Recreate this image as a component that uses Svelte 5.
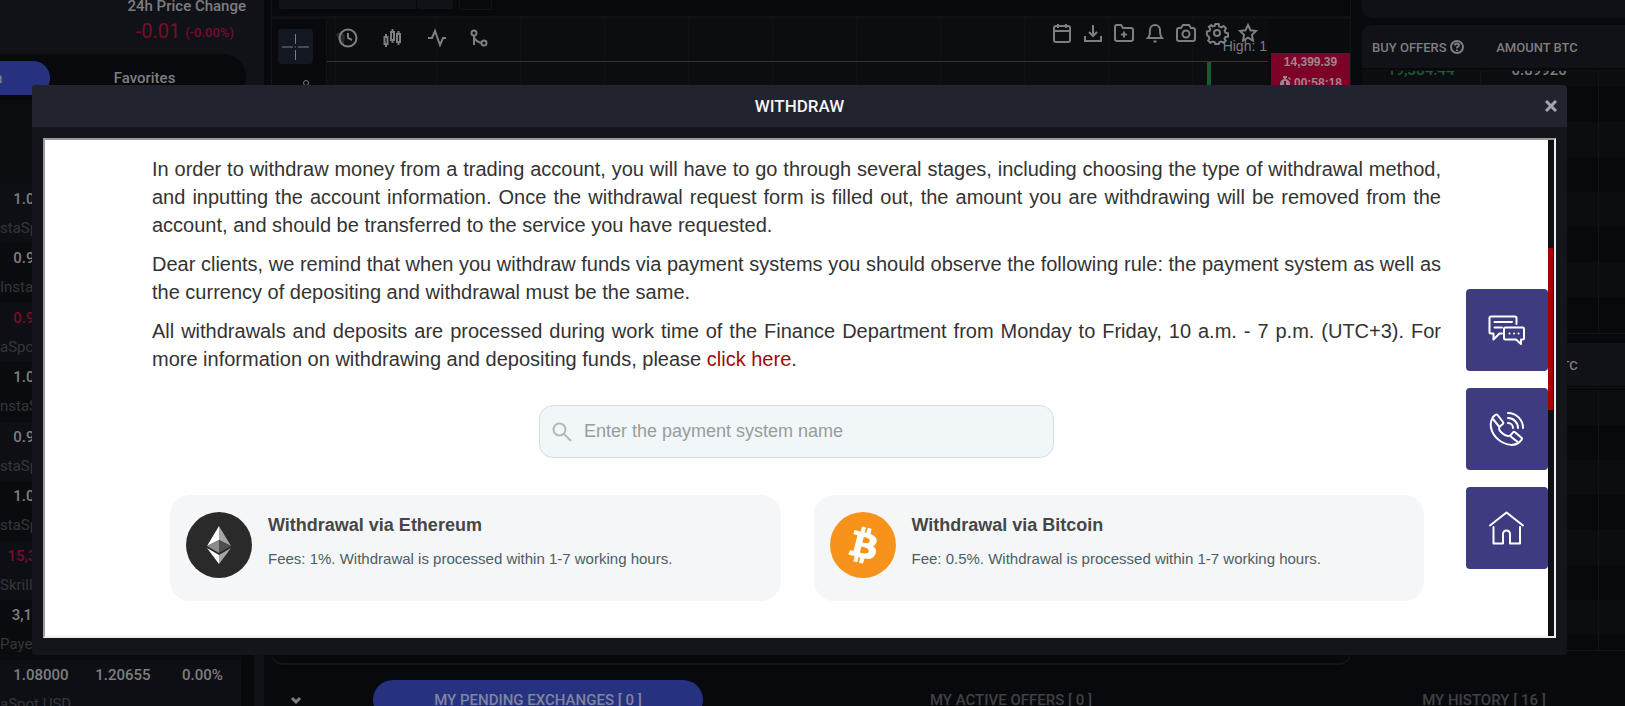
<script lang="ts">
    type Rate = { name: string; last: string; high?: string; change?: string; down?: boolean };
    type Offer = { price: string; amount: string; plain?: boolean };

    const rates: Rate[] = [
        { name: "staSpot", last: "1.08000" },
        { name: "InstaSpot", last: "0.92000" },
        { name: "aSpot", last: "0.98000", down: true },
        { name: "nstaSpot", last: "1.08000" },
        { name: "staSpot", last: "0.92000" },
        { name: "staSpot", last: "1.08000" },
        { name: "Skrill", last: "15,384.10", down: true },
        { name: "Payeer", last: "3,100.00" },
        { name: "aSpot USD", last: "1.08000", high: "1.20655", change: "0.00%" }
    ];

    const makeOffers = (count: number, price: string, plain: number[]): Offer[] =>
        [...Array(count).keys()].map((i) => ({
            price: i == 0 ? price : "",
            amount: "0.89920",
            plain: plain.includes(i)
        }));

    const buyOffers = makeOffers(8, "19,384.44", [0, 7]);
    const sellOffers = makeOffers(8, "", [2]);

    const methods = [
        { id: "eth", title: "Withdrawal via Ethereum", note: "Fees: 1%. Withdrawal is processed within 1-7 working hours." },
        { id: "btc", title: "Withdrawal via Bitcoin", note: "Fee: 0.5%. Withdrawal is processed within 1-7 working hours." }
    ];

    let search = $state("");
    let open = $state(true);

    const shown = $derived(methods.filter((m) => m.title.toLowerCase().includes(search.toLowerCase())));
</script>

<div class="page">
    <aside>
        <div class="stat">
            <div class="stat-label">24h Price Change</div>
            <div class="stat-value">-0.01 <small>(-0.00%)</small></div>
        </div>
        <div class="switch">
            <button class="on">n</button>
            <button>Favorites</button>
        </div>
        <div class="rates">
            {#each rates as rate}
                <div class="rate">
                    <div class="numbers" class:down={rate.down}>
                        <span>{rate.last}</span>
                        {#if rate.high}
                            <span>{rate.high}</span>
                            <span>{rate.change}</span>
                        {/if}
                    </div>
                    <div class="name">{rate.name}</div>
                </div>
            {/each}
        </div>
    </aside>

    <div class="work">
        <div class="upper">
            <section class="chart">
                <div class="chart-top">
                    <div class="pair"></div>
                    <div class="pair small"></div>
                    <div class="pair outline"></div>
                </div>
                <div class="chart-body">
                    <div class="tools">
                        <button class="tool" aria-label="Crosshair">
                            <svg width="35" height="35" viewBox="0 0 35 35"><path d="M4 18h11M20 18h11M17.500 5v10M17.500 21v10M17 18h1" /></svg>
                        </button>
                        <svg class="line-tool" width="35" height="20" viewBox="0 0 35 20"><circle cx="28" cy="4" r="2.500" /><path d="M26 6L14 18" /></svg>
                    </div>
                    <div class="plot">
                        <div class="plot-bar">
                            <div class="group left">
                                <svg width="24" height="24" viewBox="0 0 24 24"><path class="ghost" d="M1 8l4-2 5 3-1 9-3 1-2-4z" /><circle cx="13" cy="12" r="8.500" /><path d="M13 7v5l4 2" /></svg>
                                <svg width="24" height="24" viewBox="0 0 24 24"><path d="M6 8v3M6 18v3M12.500 3v3M12.500 14v3M18.500 5v3M18.500 16v3M4.500 11h3v7h-3zM11 6h3v8h-3zM17 8h3v8h-3z" /></svg>
                                <svg width="24" height="24" viewBox="0 0 24 24"><path d="M3 12h4l3-7 5 14 3-7h3" /></svg>
                                <svg width="24" height="24" viewBox="0 0 24 24"><circle cx="4" cy="7" r="2.500" /><circle cx="14" cy="17" r="2.500" /><path d="M4 10v9M4 12c2 3 4 4 7 5" /></svg>
                            </div>
                            <div class="group">
                                <svg width="24" height="24" viewBox="0 0 24 24"><rect x="4" y="5" width="16" height="16" rx="2" /><path d="M4 10h16M8 3v4M16 3v4" /></svg>
                                <svg width="24" height="24" viewBox="0 0 24 24"><path d="M4 15v5h16v-5M12 4v11M8 11l4 4 4-4" /></svg>
                                <svg width="24" height="24" viewBox="0 0 24 24"><path d="M3 18V6q0-2 2-2h4l2 3h8q2 0 2 2v9q0 2-2 2H5q-2 0-2-2zM12 10.500v6M9 13.500h6" /></svg>
                                <svg width="24" height="24" viewBox="0 0 24 24"><path d="M5 17q2-2 2-8a5 5 0 0 1 10 0q0 6 2 8zM10.500 20.500h3" /></svg>
                                <svg width="24" height="24" viewBox="0 0 24 24"><path d="M3 18V9q0-2 2-2h2l2-3h6l2 3h2q2 0 2 2v9q0 2-2 2H5q-2 0-2-2z" /><circle cx="12" cy="13" r="3.500" /></svg>
                                <svg width="24" height="24" viewBox="0 0 24 24"><circle cx="12" cy="12" r="3" /><path d="M10.300 3h3.400l.6 2.600 2 .8 2.300-1.400 2.400 2.400-1.400 2.300.8 2 2.600.6v3.400l-2.600.3-.9 1.700 1.300 2-2.200 2.100-2.300-1.300-2 .8-.6 1.700h-3.400l-.6-1.700-2-.8-2.300 1.300-2.200-2.200 1.300-2.200-.8-1.900L1.900 14v-3.400l2.600-.6.8-2L3.900 5.700 6.300 4l1.400 1.400 2-.5z" /></svg>
                                <svg width="24" height="24" viewBox="0 0 24 24"><path d="M12 4l2.500 5.300 5.500.7-4 3.900 1 5.600-5-2.800-5 2.800 1-5.600-4-3.900 5.500-.7z" /></svg>
                            </div>
                        </div>
                        <div class="high">High: 1</div>
                        <div class="level"></div>
                        <div class="candle"></div>
                    </div>
                    <div class="axis">
                        <div class="price">
                            <div>14,399.39</div>
                            <div class="timer">
                                <svg width="12" height="14" viewBox="0 0 12 14"><path fill-rule="evenodd" d="M4 0h4v2H7v1a5 5 0 1 1-2 0V2H4zM9 2l1-1 2 2-1 1zM5 5v4h2V5z" /></svg>
                                00:58:18
                            </div>
                        </div>
                    </div>
                </div>
            </section>

            <section class="orders">
                <div class="orders-cap"></div>
                {#each [buyOffers, sellOffers] as offers, n}
                    <div class="book" class:second={n == 1}>
                        <div class="book-head">
                            <span>
                                {#if n == 0}
                                    BUY OFFERS
                                    <svg width="14" height="14" viewBox="0 0 14 14"><circle cx="7" cy="7" r="6" /><path d="M5 5.500q0-2 2-2t2 1.700q0 .8-1 1.400T7 8.300M7 9.500v1.400" /></svg>
                                {/if}
                            </span>
                            <span>AMOUNT BTC</span>
                            <span>AMOUNT</span>
                        </div>
                        <div class="book-rows">
                            <table>
                                <tbody>
                                    {#each offers as offer}
                                        <tr>
                                            <td class="green">{offer.price}</td>
                                            <td class:gold={!offer.plain}>{offer.amount}</td>
                                            <td></td>
                                        </tr>
                                    {/each}
                                </tbody>
                            </table>
                        </div>
                    </div>
                {/each}
            </section>
        </div>

        <nav class="tabs">
            <svg width="12" height="12" viewBox="0 0 12 12"><path d="M2 4l4 4 4-4" /></svg>
            <button class="on">MY PENDING EXCHANGES [ 0 ]</button>
            <button>MY ACTIVE OFFERS [ 0 ]</button>
            <button>MY HISTORY [ 16 ]</button>
        </nav>
    </div>
</div>

{#if open}
    <div class="overlay">
        <div class="modal" role="dialog" aria-labelledby="modal-title">
            <header>
                <h1 id="modal-title">WITHDRAW</h1>
                <button class="close" aria-label="Close" onclick={() => (open = false)}>
                    <svg width="12" height="12" viewBox="0 0 12 12"><path d="M1 1l10 10M11 1l-10 10" /></svg>
                </button>
            </header>
            <div class="frame">
                <div class="content">
                    <p>In order to withdraw money from a trading account, you will have to go through several stages, including choosing the type of withdrawal method, and inputting the account information. Once the withdrawal request form is filled out, the amount you are withdrawing will be removed from the account, and should be transferred to the service you have requested.</p>
                    <p>Dear clients, we remind that when you withdraw funds via payment systems you should observe the following rule: the payment system as well as the currency of depositing and withdrawal must be the same.</p>
                    <p>All withdrawals and deposits are processed during work time of the Finance Department from Monday to Friday, 10 a.m. - 7 p.m. (UTC+3). For more information on withdrawing and depositing funds, please <a href="#funds">click here</a>.</p>

                    <label class="search">
                        <svg width="20" height="20" viewBox="0 0 20 20"><circle cx="7.500" cy="7.500" r="6" /><path d="M12 12l7 7" /></svg>
                        <input type="text" placeholder="Enter the payment system name" aria-label="Payment system name" bind:value={search} />
                    </label>

                    <div class="methods">
                        {#each shown as method (method.id)}
                            <div class="method">
                                {#if method.id == "eth"}
                                    <svg class="coin" width="66" height="66" viewBox="0 0 66 66">
                                        <circle cx="33" cy="33" r="33" fill="#2a2a2a" />
                                        <path fill="#fff" d="M33 14v14l-12 6z" />
                                        <path fill="#a6a6a6" d="M33 14v14l12 6z" />
                                        <path fill="#8c8c8c" d="M33 28v13l-12-7z" />
                                        <path fill="#4e4e4e" d="M33 28v13l12-7z" />
                                        <path fill="#fff" d="M21 36l12 7v9z" />
                                        <path fill="#a6a6a6" d="M45 36l-12 7v9z" />
                                    </svg>
                                {:else}
                                    <svg class="coin" width="66" height="66" viewBox="0 0 66 66">
                                        <circle cx="33" cy="33" r="33" fill="#f7931a" />
                                        <path fill="#fff" stroke="#fff" stroke-width=".5" transform="translate(4 4) scale(1.820)" d="M23.189 14.02c.314-2.096-1.283-3.223-3.465-3.975l.708-2.84-1.728-.43-.69 2.765c-.454-.114-.92-.22-1.385-.326l.695-2.783L15.596 6l-.708 2.839c-.376-.086-.746-.17-1.104-.26l.002-.009-2.384-.595-.46 1.846s1.283.294 1.256.312c.7.175.826.638.805 1.006l-.806 3.235c.048.012.11.03.18.057l-.183-.045-1.13 4.532c-.086.212-.303.531-.793.41.018.025-1.256-.313-1.256-.313l-.858 1.978 2.25.561c.418.105.828.215 1.231.318l-.715 2.872 1.727.43.708-2.84c.472.127.93.245 1.378.357l-.706 2.828 1.728.43.715-2.866c2.948.558 5.164.333 6.097-2.333.752-2.146-.037-3.385-1.588-4.192 1.13-.26 1.98-1.003 2.207-2.538zm-3.95 5.538c-.533 2.147-4.148.986-5.32.695l.95-3.805c1.172.293 4.929.872 4.37 3.11zm.535-5.569c-.487 1.953-3.495.96-4.47.717l.86-3.45c.975.243 4.118.696 3.61 2.733z" />
                                    </svg>
                                {/if}
                                <div>
                                    <h2>{method.title}</h2>
                                    <div class="note">{method.note}</div>
                                </div>
                            </div>
                        {/each}
                    </div>
                </div>

                <div class="shortcuts">
                    <button aria-label="Chat">
                        <svg width="82" height="82" viewBox="0 0 82 82"><path d="M50.500 35v-6q0-1.500-1.500-1.500H25q-1.500 0-1.500 1.500v14q0 1.500 1.500 1.500h2.500v6l6-6H36M28.500 33H46M28.500 38.500H36M39.500 38.500h17q1.500 0 1.500 1.500v9q0 1.500-1.500 1.500H55V55l-5-4.500H39.500Q38 50.500 38 49v-9q0-1.500 1.500-1.500z" /><path class="dots" d="M43.500 44.500h.1M48 44.500h.1M52.500 44.500h.1" /></svg>
                    </button>
                    <button aria-label="Call">
                        <svg width="82" height="82" viewBox="0 0 82 82"><path d="M27 29l2.500-2.300q1-.7 2 .3l5.500 7q.8 1-.2 2l-2.500 2q-1 .8-1.800-.2L26.600 30.500M27 29c-6 10 1 20 8 24.500 7 4 14 4.500 18.500.5l2.200-2.400q.8-1-.2-1.900l-6.500-5.500q-1-.8-2 .2l-2.200 2.500q-.8 1 .2 1.800l7 5.600M33.500 39c-2 3 6 11 10.500 8.500M42 25a15 15 0 0 1 15 15M42 30a10 10 0 0 1 10 10M42 35a5 5 0 0 1 5 5" /></svg>
                    </button>
                    <button aria-label="Home">
                        <svg width="82" height="82" viewBox="0 0 82 82"><path d="M24 38.500l16.500-13L57 38.500M27.500 40v16.500H37V47a3.500 3.500 0 0 1 7 0v9.500h10V40" /></svg>
                    </button>
                </div>

                <div class="track"><div class="thumb"></div></div>
            </div>
        </div>
    </div>
{/if}

<style>
    :global(body) {
        background: #08090d;
    }

    button {
        border: none;
        padding: 0;
        background: transparent;
        color: inherit;
        font: inherit;
        cursor: pointer;
    }

    svg {
        flex: none;
        fill: none;
        stroke: currentColor;
    }

    .page {
        display: flex;
        height: 100vh;
        overflow: hidden;
        font-family: Roboto, sans-serif;
        font-size: 15px;
        font-weight: 500;
        color: #7d7e80;
    }

    aside {
        display: flex;
        flex-direction: column;
        flex: none;
        width: 264px;
        overflow: hidden;
        background: #101217;
    }

    .stat {
        padding-right: 18px;
        height: 54px;
        text-align: right;
    }

    .stat-label {
        line-height: 12px;
    }

    .stat-value {
        padding-right: 12px;
        font-size: 20px;
        font-weight: 400;
        line-height: 38px;
        color: #780d2b;
    }

    .stat-value small {
        font-size: 13px;
        font-weight: 500;
        vertical-align: 1px;
    }

    .switch {
        display: grid;
        grid-template-columns: 50px 1fr;
        flex: none;
        height: 34px;
        margin-right: 18px;
        padding: 7px 7px 5px 0;
        border-radius: 0 24px 24px 0;
        background: #08090c;
    }

    .switch button.on {
        border-radius: 0 17px 17px 0;
        background: #26327f;
        text-align: left;
        text-indent: -6px;
    }

    .rates {
        display: flex;
        flex-direction: column;
        flex: 1;
        margin: 0 10px -13px 0;
        padding-top: 84px;
        border-right: 13px solid #08090c;
        background: #0b0c10;
    }

    .rate {
        flex: 1;
        background: #0e0f14;
        line-height: 30px;
    }

    .rate:nth-child(even) {
        background: #0a0b0e;
    }

    .numbers {
        display: grid;
        grid-template-columns: 82px 82px 1fr;
        text-align: center;
    }

    .numbers.down {
        color: #780d2b;
    }

    .name {
        color: #35363a;
        font-weight: 400;
        line-height: 28px;
    }

    .work {
        display: flex;
        flex-direction: column;
        flex: 1;
        min-width: 0;
    }

    .upper {
        display: flex;
        flex: 1;
        min-height: 0;
    }

    .chart {
        display: flex;
        flex-direction: column;
        flex: 1;
        margin-left: 7px;
        border: 1px solid #131419;
        border-width: 0 1px 2px 1px;
        border-radius: 0 0 12px 12px;
        overflow: hidden;
    }

    .chart-top {
        display: flex;
        height: 16px;
        padding-left: 7px;
        border-bottom: 3px solid #101116;
    }

    .pair {
        width: 137px;
        height: 9px;
        border-radius: 0 0 0 3px;
        background: #111217;
    }

    .pair.small {
        width: 36px;
        margin-left: 1px;
    }

    .pair.outline {
        width: 31px;
        margin-left: 6px;
        border: 1px solid #131419;
        border-top: none;
        background: transparent;
    }

    .chart-body {
        display: flex;
        flex: 1;
        margin-bottom: 12px;
    }

    .tools {
        width: 55px;
        padding: 10px 6px;
        box-sizing: border-box;
        border-right: 1px solid #131419;
    }

    .tool {
        display: block;
        width: 35px;
        height: 35px;
        margin-bottom: 15px;
        border-radius: 4px;
        background: #13171f;
    }

    .plot {
        flex: 1;
        background: repeating-linear-gradient(90deg, transparent 0 83px, #111217 83px 84px) 26px 0, #0c0d11;
    }

    .plot-bar {
        display: flex;
        justify-content: space-between;
        height: 20px;
        padding: 2px 8px 0 8px;
    }

    .plot-bar svg {
        stroke-width: 2px;
    }

    .group {
        display: flex;
        gap: 7px;
    }

    .group.left {
        gap: 21px;
        padding-top: 5px;
    }

    .ghost {
        fill: #292a2d;
        stroke: none;
    }

    .high {
        height: 20px;
        font: 14px/10px "Liberation Sans", sans-serif;
        text-align: right;
        padding-right: 1px;
    }

    .level {
        height: 1px;
        background: #6d1730;
    }

    .candle {
        width: 4px;
        height: 60px;
        margin: 0 57px 0 auto;
        background: #175c31;
    }

    .axis {
        width: 79px;
        padding: 34px 0 0 3px;
        background: #0a0b0f;
    }

    .price {
        height: 50px;
        background: #7c0327;
        font: bold 12px/18px "Liberation Sans", sans-serif;
        color: #9c8590;
        text-align: center;
    }

    .timer {
        display: flex;
        align-items: center;
        justify-content: center;
        gap: 3px;
        margin-top: 3px;
    }

    .timer svg {
        fill: currentColor;
        stroke: none;
    }

    .orders {
        display: flex;
        flex-direction: column;
        width: 263px;
        margin-left: 11px;
        overflow: hidden;
    }

    .orders-cap {
        flex: none;
        height: 18px;
        margin-bottom: 7px;
        border-radius: 0 0 0 10px;
        background: #101116;
    }

    .book-head {
        display: grid;
        grid-template-columns: 112px 126px 118px;
        align-items: center;
        height: 43px;
        padding-top: 2px;
        box-sizing: border-box;
        border-radius: 10px 0 0 0;
        background: #111217;
        font-size: 13px;
        text-align: center;
    }

    .book-head svg {
        stroke-width: 2px;
        vertical-align: -2px;
    }

    .book-rows {
        height: 262px;
        margin: 3px 0 9px;
        overflow: hidden;
        border-bottom: 1px solid #131419;
        box-shadow: 0 -1px #111217;
    }

    .book.second .book-rows {
        margin-top: 2px;
    }

    table {
        width: 355px;
        margin-top: -19px;
        border-collapse: collapse;
        table-layout: fixed;
    }

    .second table {
        margin-top: 2px;
    }

    td {
        height: 35px;
        padding: 0;
        border-right: 1px solid #131419;
        box-sizing: border-box;
        text-align: center;
    }

    tr:nth-child(odd) {
        background: #0c0d11;
    }

    td.green {
        color: #175c31;
    }

    td.gold {
        color: #7c5c25;
    }

    .tabs {
        display: flex;
        align-items: flex-start;
        flex: none;
        height: 26px;
        padding: 15px 0 0 26px;
        overflow: hidden;
    }

    .tabs svg {
        margin: 14px 71px 0 0;
        stroke-width: 3px;
    }

    .tabs button {
        flex: none;
        width: 330px;
        height: 40px;
        margin-right: 143px;
        border-radius: 20px;
        color: #404145;
    }

    .tabs button.on {
        background: #26327f;
        color: #7f84a0;
    }

    .overlay {
        position: fixed;
        inset: 0;
        display: flex;
        padding: 85px 58px 51px 32px;
    }

    .modal {
        display: flex;
        flex-direction: column;
        flex: 1;
        min-width: 0;
        padding-bottom: 17px;
        border-radius: 4px;
        background: #14151b;
    }

    header {
        display: grid;
        grid-template-columns: 33px 1fr 33px;
        align-items: center;
        height: 42px;
        margin-bottom: 11px;
        border-radius: 4px 4px 0 0;
        background: #21232e;
        font-family: Roboto, sans-serif;
        color: #f4f4f6;
    }

    h1 {
        grid-column: 2;
        margin: 0;
        font-size: 17px;
        line-height: 20px;
        font-weight: 500;
        text-align: center;
    }

    .close {
        display: flex;
        justify-content: center;
        color: #a3a5ae;
    }

    .close svg {
        stroke-width: 3px;
    }

    .frame {
        position: relative;
        display: flex;
        flex: 1;
        min-height: 0;
        margin: 0 11px;
        border: 2px solid;
        border-color: #9a9a9a #eee #eee #9a9a9a;
        background: #fff;
        font-family: "Liberation Sans", Arial, sans-serif;
        color: #333;
    }

    .content {
        flex: 1;
        overflow: hidden;
        padding: 15px 107px 0;
    }

    p {
        margin: 0 0 11px;
        font-size: 20px;
        line-height: 28px;
        text-align: justify;
    }

    a {
        color: #9d0a0e;
        text-decoration: none;
    }

    .search {
        display: flex;
        align-items: center;
        gap: 12px;
        width: 515px;
        height: 53px;
        margin: 32px auto 37px;
        padding: 0 12px;
        box-sizing: border-box;
        border: 1px solid #d3e0e2;
        border-radius: 14px;
        background: #f1f6f9;
    }

    .search svg {
        color: #b3b8ba;
        stroke-width: 2px;
    }

    input {
        flex: 1;
        border: none;
        outline: none;
        padding: 0;
        background: transparent;
        font: 18px "Liberation Sans", Arial, sans-serif;
        color: #333;
    }

    input::placeholder {
        color: #989c9e;
    }

    .methods {
        display: grid;
        grid-template-columns: 1fr 1fr;
        gap: 33px;
        padding: 0 17px 0 18px;
    }

    .method {
        display: flex;
        gap: 16px;
        height: 106px;
        padding: 17px 16px;
        box-sizing: border-box;
        border-radius: 20px;
        background: #f4f6f8;
    }

    .coin {
        stroke: none;
    }

    h2 {
        margin: 0 0 11px;
        font-size: 18px;
        line-height: 26px;
        color: #464646;
    }

    .note {
        font-size: 15px;
        line-height: 20px;
        color: #4a6064;
    }

    .shortcuts {
        position: absolute;
        top: 149px;
        right: 6px;
        display: flex;
        flex-direction: column;
        gap: 17px;
    }

    .shortcuts button {
        width: 82px;
        height: 82px;
        border-radius: 4px;
        background: #3f3b80;
        color: #fff;
    }

    .shortcuts svg {
        display: block;
        stroke-width: 2px;
        stroke-linecap: round;
        stroke-linejoin: round;
    }

    .track {
        display: grid;
        grid-template-rows: 217fr 328fr 455fr;
        width: 6px;
        background: #0d0f14;
    }

    .thumb {
        grid-row: 2;
        margin-right: 1px;
        background: #a80000;
    }
</style>
